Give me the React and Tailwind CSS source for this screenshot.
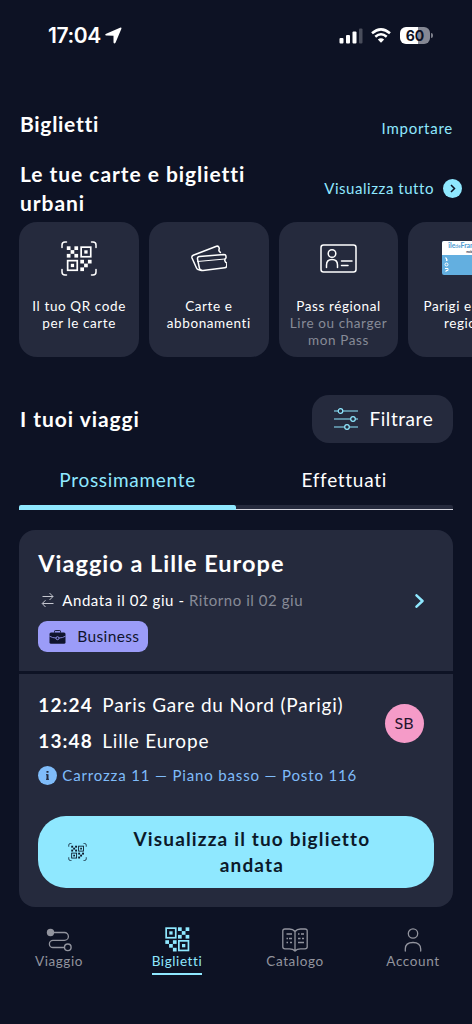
import React from "react";
import clsx from "clsx";

const Corners = () => (
  <path
    d="M1 6.500V4q0-3 3-3h1.500M30.500 1H32q3 0 3 3v2.500M35 28.500V31q0 3-3 3h-1.500M5.500 34H4q-3 0-3-3v-2.500"
    fill="none"
    stroke="currentColor"
    strokeWidth="1.500"
    strokeLinecap="round"
  />
);

const Finder = ({ x, y }) => (
  <g transform={`translate(${x} ${y})`}>
    <rect x="0.850" y="0.850" width="9.600" height="9.600" fill="none" stroke="currentColor" strokeWidth="1.700" />
    <rect x="4" y="4" width="3.300" height="3.300" />
  </g>
);

const Cells = ({ x, y, cells }) => (
  <g transform={`translate(${x} ${y})`}>
    {cells.map(([cx, cy]) => (
      <rect key={`${cx}-${cy}`} x={cx * 3.8} y={cy * 3.8} width="3.700" height="3.700" />
    ))}
  </g>
);

const cross = [[0, 0], [2, 0], [1, 1], [0, 2], [2, 2]];

const QrScan = ({ className }) => (
  <svg viewBox="0 0 36 35" className={className} fill="currentColor">
    <Corners />
    <Cells x={5.8} y={5.3} cells={cross} />
    <Finder x={19.3} y={5.3} />
    <Finder x={5.8} y={18.8} />
    <Cells x={19.3} y={18.8} cells={[[0, 0], [2, 0], [1, 1], [0, 2]]} />
  </svg>
);

const QrCode = ({ className }) => (
  <svg viewBox="0 0 25 25" className={className} fill="currentColor">
    <Finder x={0.3} y={0.3} />
    <Cells x={13} y={0.3} cells={cross} />
    <Cells x={0.3} y={13.2} cells={[[0, 0], [2, 0], [1, 1], [2, 2]]} />
    <Finder x={13} y={13} />
  </svg>
);

const TicketsIcon = () => (
  <svg viewBox="0 0 36 27" className="mb-[3px] h-[27px] w-9" fill="none" stroke="currentColor" strokeWidth="1.500" strokeLinejoin="round" strokeLinecap="round">
    <path d="M8.500 11.500 33 9.500q2 0 2 2v1.500q-1.800 1.200-1 3 .3 1.500 1.800 2v2.500q0 2-2 2.200L12 25.500q-3 .2-3.500-2L6.500 14q-.3-2.200 2-2.500Z" />
    <path d="M6.500 16.500 34 14" strokeWidth="1" />
    <path d="M10 25.200 7 24.500q-1-.3-1.500-1.500L1 13q-.6-2 1.200-2.800L25.500 1.300q1.800-.6 2.400 1l.4 1.500q-1 1.600.3 2.800l.8.900" />
  </svg>
);

const IdCard = () => (
  <svg viewBox="0 0 37 29" className="mb-[3px] h-[29px] w-[37px]" fill="none" stroke="currentColor" strokeWidth="1.500" strokeLinecap="round">
    <rect x="1" y="1" width="35" height="27" rx="2.500" />
    <circle cx="12" cy="9.500" r="3.800" />
    <path d="M6.500 23.500V21q0-5.500 5.500-5.500t5.500 5.500v2.500M21.500 17h10.500M21.500 21.500h6.500" />
  </svg>
);

const RegionCard = () => (
  <div className="mb-1 h-[34px] w-[52px] shrink-0 overflow-hidden rounded-[2px] bg-[#63afe0]">
    <div className="h-3.5 whitespace-nowrap bg-white pl-1.5 text-[7px] font-bold leading-[9px] tracking-[-0.1px] text-[#4d9bd3]">
      île<span className="text-[5px] font-normal">de</span>France
      <div className="pl-[18px] text-[3px] leading-[3px] text-gray-700">mobilités</div>
    </div>
    <svg viewBox="0 0 6 16" className="ml-0.5 mt-0.5 h-4 w-1.5" fill="none" stroke="#fff" strokeWidth="1">
      <path d="M1 1h1.500v3M2 3h2M1 11.500h3v2H2v1.500" />
      <circle cx="2.500" cy="7.500" r="1.500" />
    </svg>
  </div>
);

const shortcuts = [
  { icon: <QrScan className="mb-1 h-[35px] w-9" />, title: "Il tuo QR code per le carte", pad: "px-2.5" },
  { icon: <TicketsIcon />, title: "Carte e abbonamenti", pad: "px-2.5" },
  { icon: <IdCard />, title: "Pass régional", note: "Lire ou charger mon Pass", pad: "px-2" },
  { icon: <RegionCard />, title: "Parigi e la sua regione", pad: "px-2" },
];

const StatusBar = () => (
  <div className="flex h-[71px] items-center justify-between pl-12 pr-[39px] font-['Inter'] text-white">
    <div className="flex items-center gap-1">
      <span className="text-[21px] font-semibold tracking-[-0.4px]">17:04</span>
      <svg viewBox="0 0 17 17" className="h-[17px] w-[17px]" fill="currentColor">
        <path d="M15 .700Q17 0 16.300 1.900L10.500 15.700Q9.300 17.200 8.500 15.500V8.700L1.200 8.500Q-.8 7.800 1.200 6.700Z" />
      </svg>
    </div>
    <div className="flex items-center">
      <svg viewBox="0 0 24 16" className="h-4 w-6" fill="currentColor">
        <rect x="0.500" y="10" width="4" height="5.500" rx="1" />
        <rect x="7" y="7" width="4" height="8.500" rx="1" />
        <rect x="13.500" y="3.500" width="4" height="12" rx="1" />
        <rect x="20" y="0.500" width="3.500" height="15" rx="1" opacity="0.250" />
      </svg>
      <svg viewBox="0 0 20 15" className="ml-2 h-[15px] w-5" fill="none" stroke="currentColor" strokeWidth="2.500">
        <path d="M1 5.300Q10-2.600 19 5.300M4.300 8.800Q10 3.800 15.700 8.800" />
        <path d="M10 14.800 6.800 11.600Q10 9 13.200 11.600Z" fill="currentColor" stroke="none" />
      </svg>
      <div className="ml-[9px] flex h-[17px] w-[30px] items-center justify-center rounded-[6px] bg-linear-to-r from-white from-60% to-[#858894] to-60% text-[14px] font-bold leading-none text-[#0d1224]">
        60
      </div>
      <div className="ml-px h-[5px] w-[2px] rounded-r-full bg-[#7c7f8b]" />
    </div>
  </div>
);

const navItems = [
  {
    name: "Viaggio",
    icon: (
      <svg viewBox="0 0 26 24" className="h-6 w-[26px]" fill="none" stroke="currentColor" strokeWidth="1.300">
        <circle cx="4.500" cy="4.500" r="3.700" fill="currentColor" stroke="none" />
        <path d="M8 4.500h10.500a3.900 3.900 0 0 1 0 7.800H7a3.600 3.600 0 0 0 0 7.200h11.500" />
        <circle cx="21.800" cy="19.300" r="3.300" strokeWidth="1.400" />
      </svg>
    ),
  },
  { name: "Biglietti", active: true, icon: <QrCode className="h-[25px] w-[25px]" /> },
  {
    name: "Catalogo",
    icon: (
      <svg viewBox="0 0 26 24" className="h-6 w-[26px]" fill="none" stroke="currentColor" strokeWidth="1.300" strokeLinejoin="round">
        <path d="M13 3.500Q11 1 7.500 1H3Q.8 1 .8 3v16q0 1.800 2.200 1.800h4.500q3.500 0 5.500 2.200 2-2.200 5.500-2.200H23q2.200 0 2.200-1.800V3q0-2-2.200-2h-4.500Q15 1 13 3.500V22" />
        <path d="M4.500 6h5.500M4.500 10.500h1.500m1 0h3M4.500 14.500h1.500m2 0h2M16 6h1.500m1.500 0h3M16 10.500h2.500m1.500 0h2M16 14.500h6" strokeWidth="1.700" />
      </svg>
    ),
  },
  {
    name: "Account",
    icon: (
      <svg viewBox="0 0 18 24" className="h-6 w-[18px]" fill="none" stroke="currentColor" strokeWidth="1.300" strokeLinecap="round">
        <circle cx="9" cy="5.500" r="4.700" />
        <path d="M1.300 23v-2q0-6.500 7.700-6.500t7.700 6.500v2" />
      </svg>
    ),
  },
];

const Trip = () => (
  <section className="ml-[19.300px] mr-[19.500px] mt-5 h-[377px] overflow-hidden rounded-[16px] bg-[#252a3d]">
    <div className="flex h-[144px] items-center border-b-[3px] border-[#0e1325] pl-[19px] pr-7">
      <div className="flex-1 pt-0.5">
        <h3 className="-mt-1 whitespace-nowrap text-[23.5px] font-bold leading-8 tracking-[1px]">Viaggio a Lille Europe</h3>
        <div className="mt-[11px] flex h-5 items-center whitespace-nowrap text-[15px] tracking-[0.550px]">
          <svg viewBox="0 0 14 16" className="ml-[3px] mr-[7px] h-4 w-3.5" fill="none" stroke="#c4c6cf" strokeWidth="1">
            <path d="M1.500 4.500H12M8.500 1l3.500 3.500L8.500 8M12.500 11.500H1.500M4.500 8.200 1.200 11.500l3.300 3.500" />
          </svg>
          Andata il 02 giu -&nbsp;<span className="text-[#878a97]">Ritorno il 02 giu</span>
        </div>
        <div className="mt-[11px] flex h-[31px] w-[110px] items-center gap-[11px] rounded-[9px] bg-[#9b9cf8] pl-[11px] text-[15.5px] tracking-[0.350px] text-[#10142d]">
          <svg viewBox="0 0 17 14" className="h-3.5 w-[17px] shrink-0">
            <path d="M5.500 2.500V1.300q0-.7.700-.7h4.600q.7 0 .7.700v1.200" fill="none" stroke="currentColor" strokeWidth="1" />
            <rect x="0.500" y="2.500" width="16" height="11.300" rx="1.500" fill="currentColor" />
            <path d="M.5 6.200Q3.500 7.900 7 8m3 0q3.500-.1 6.500-1.800" fill="none" stroke="#9b9cf8" strokeWidth="0.800" />
            <circle cx="8.500" cy="8.200" r="1.500" fill="none" stroke="#9b9cf8" strokeWidth="0.900" />
          </svg>
          Business
        </div>
      </div>
      <svg viewBox="0 0 10 14" className="h-3.5 w-2.5" fill="none" stroke="#8fe8ff" strokeWidth="2.500" strokeLinecap="round" strokeLinejoin="round">
        <path d="M1.500 1.300 7.500 7l-6 5.700" />
      </svg>
    </div>

    <div className="px-[19px] pt-[13px]">
      <div className="flex items-center justify-between pr-[10px]">
        <div className="whitespace-nowrap text-[19px] leading-9 tracking-[0.800px]">
          <div className="flex"><b className="w-16 tracking-[1.100px]">12:24</b>Paris Gare du Nord (Parigi)</div>
          <div className="flex"><b className="w-16 tracking-[1.100px]">13:48</b>Lille Europe</div>
        </div>
        <div className="flex size-[39px] items-center justify-center rounded-full bg-[#f59bc8] text-base text-[#25152e]">SB</div>
      </div>
      <div className="mt-[6px] flex items-center gap-[5px] whitespace-nowrap text-[15px] leading-5 tracking-[0.850px] text-[#7fbcfa]">
        <svg viewBox="0 0 19 19" className="size-[19px]">
          <circle cx="9.500" cy="9.500" r="9.500" fill="#7fbcfa" />
          <path d="M9.500 5v1.800M9.500 8.200v5.500" stroke="#252a3d" strokeWidth="2" />
          <path d="M8 8.700h1.500M8 13.300h3" stroke="#252a3d" strokeWidth="1" />
        </svg>
        Carrozza 11 — Piano basso — Posto 116
      </div>
      <button className="mt-[31px] flex h-[72px] w-full items-center rounded-[28px] bg-[#8fe8ff] pl-[30px] text-[#0b192a]">
        <QrScan className="h-[18px] w-[19px] shrink-0" />
        <span className="-mt-px flex-1 pl-0.5 pr-[19px] text-[19px] font-bold leading-[26px] tracking-[1.150px]">
          Visualizza il tuo biglietto
          <br />
          andata
        </span>
      </button>
    </div>
  </section>
);

export default function App() {
  return (
    <div className="h-[1024px] w-[472px] overflow-hidden bg-[#0d1224] font-['Lato',sans-serif] text-white">
      <StatusBar />

      <header className="flex h-[89px] items-start justify-between pl-5 pr-[19px] pt-[37px]">
        <h1 className="text-[21px] font-bold leading-8 tracking-[0.700px]">Biglietti</h1>
        <a className="mt-[10px] text-[15px] leading-5 tracking-[0.750px] text-[#8fe8ff]">Importare</a>
      </header>

      <div className="flex h-[62px] items-start justify-between pl-5 pr-2.5">
        <h2 className="-mt-px text-[21px] font-bold leading-[29px] tracking-[0.950px]">
          Le tue carte e biglietti
          <br />
          urbani
        </h2>
        <a className="mt-[18px] flex items-center gap-[9px] text-[15px] leading-5 tracking-[0.550px] text-[#8fe8ff]">
          Visualizza tutto
          <svg viewBox="0 0 19 19" className="size-[19px]">
            <circle cx="9.500" cy="9.500" r="9.500" fill="#8fe8ff" />
            <path d="m8 6 3.500 3.500L8 13" fill="none" stroke="#0d1224" strokeWidth="1.500" />
          </svg>
        </a>
      </div>

      <div className="flex gap-2.5 overflow-hidden pl-[19.300px]">
        {shortcuts.map((item) => (
          <div key={item.title} className={clsx("flex h-[135px] w-[119.700px] shrink-0 flex-col items-center rounded-[18px] bg-[#252a3d]", item.pad)}>
            <div className="flex h-[76px] items-center">{item.icon}</div>
            <p className="text-center text-[13.5px] leading-[17px] tracking-[0.600px]">
              {item.title}
              {item.note && <span className="block text-[#878a97]">{item.note}</span>}
            </p>
          </div>
        ))}
      </div>

      <div className="ml-5 mr-[19px] mt-[38px] flex h-12 items-center justify-between">
        <h2 className="text-[21px] font-bold tracking-[0.950px]">I tuoi viaggi</h2>
        <button className="flex h-12 w-[141px] items-center gap-3 rounded-[17px] bg-[#252a3d] pl-[21.500px] text-[19px] tracking-[0.550px]">
          <svg viewBox="0 0 24 22" className="h-[22px] w-6" fill="#252a3d" stroke="#8fe8ff" strokeWidth="1.200">
            <path d="M0 3h24M0 11h24M0 19h24" />
            <circle cx="6.500" cy="3" r="2.300" />
            <circle cx="19" cy="11" r="2.300" />
            <circle cx="13" cy="19" r="2.300" />
          </svg>
          Filtrare
        </button>
      </div>

      <div className="ml-[19.300px] mr-[19.500px] mt-[17px] grid h-[50px] grid-cols-2 text-center text-[19px] leading-10 tracking-[0.700px]">
        <div className="flex flex-col justify-between text-[#8fe8ff]">
          Prossimamente
          <div className="h-[5px] rounded-t-[2px] bg-[#8fe8ff]" />
        </div>
        <div className="flex flex-col justify-between">
          Effettuati
          <div className="h-[5px] rounded-tr-[2px] border-b border-[#d5d6df] bg-[#252a3d]" />
        </div>
      </div>

      <Trip />

      <nav className="grid grid-cols-4 pt-5">
        {navItems.map((item) => (
          <div key={item.name} className={clsx("flex flex-col items-center", item.active ? "text-[#8fe8ff]" : "text-[#92949e]")}>
            <div className="flex h-[25px] items-center">{item.icon}</div>
            <span className={clsx("border-b-2 pb-0.5 text-[13.5px] leading-[19px] tracking-[0.600px]", item.active ? "border-[#8fe8ff]" : "border-transparent")}>
              {item.name}
            </span>
          </div>
        ))}
      </nav>
    </div>
  );
}
